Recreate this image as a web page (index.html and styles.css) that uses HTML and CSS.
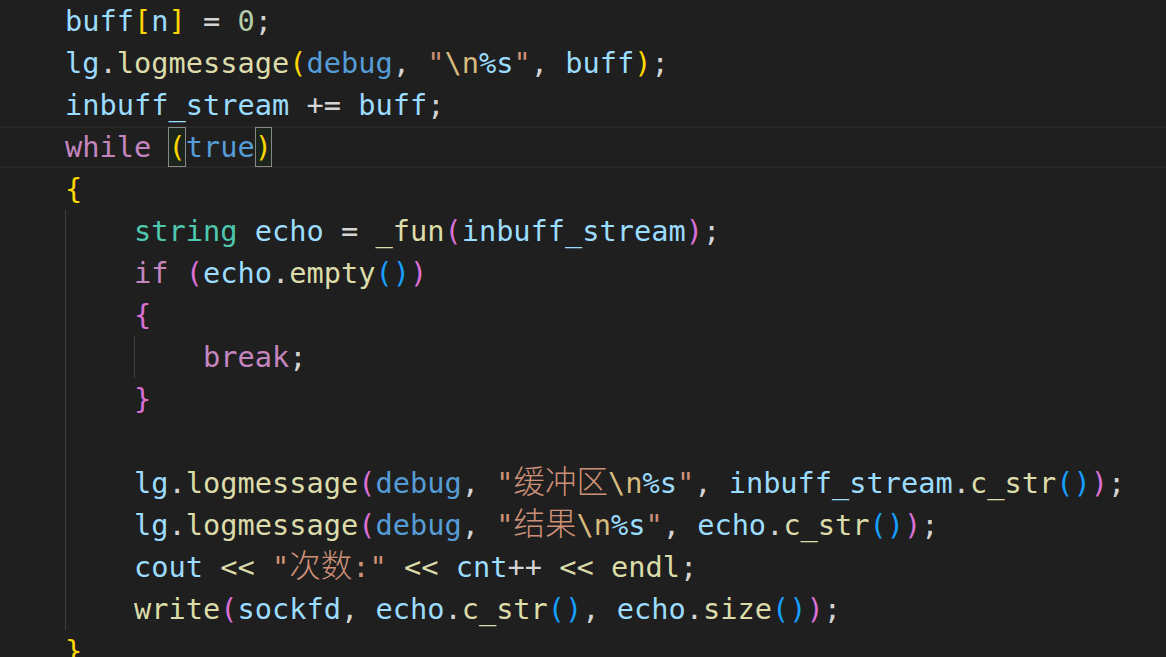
FILE: index.html
```html
<!DOCTYPE html>
<html lang="zh-CN">
<head>
    <meta charset="UTF-8">
    <title>server.cpp</title>
    <link rel="stylesheet" href="styles.css">
</head>
<body>
    <div class="editor">
        <div class="ln"><span class="var">buff</span><span class="b1">[</span><span class="var">n</span><span class="b1">]</span> = <span class="num">0</span>;</div>
        <div class="ln"><span class="var">lg</span>.<span class="fn">logmessage</span><span class="b1">(</span><span class="kw">debug</span>, <span class="str">"<span class="esc">\n</span><span class="fmt">%s</span>"</span>, <span class="var">buff</span><span class="b1">)</span>;</div>
        <div class="ln"><span class="var">inbuff_stream</span> += <span class="var">buff</span>;</div>
        <div class="ln current"><span class="ctl">while</span> <span class="b1 match">(</span><span class="kw">true</span><span class="b1 match">)</span></div>
        <div class="ln"><span class="b1">{</span></div>
        <div class="indent">
            <div class="ln"><span class="type">string</span> <span class="var">echo</span> = <span class="fn">_fun</span><span class="b2">(</span><span class="var">inbuff_stream</span><span class="b2">)</span>;</div>
            <div class="ln"><span class="ctl">if</span> <span class="b2">(</span><span class="var">echo</span>.<span class="fn">empty</span><span class="b3">()</span><span class="b2">)</span></div>
            <div class="ln"><span class="b2">{</span></div>
            <div class="indent">
                <div class="ln"><span class="ctl">break</span>;</div>
            </div>
            <div class="ln"><span class="b2">}</span></div>
            <div class="ln"> </div>
            <div class="ln"><span class="var">lg</span>.<span class="fn">logmessage</span><span class="b2">(</span><span class="kw">debug</span>, <span class="str">"<span class="cjk">缓冲区</span><span class="esc">\n</span><span class="fmt">%s</span>"</span>, <span class="var">inbuff_stream</span>.<span class="fn">c_str</span><span class="b3">()</span><span class="b2">)</span>;</div>
            <div class="ln"><span class="var">lg</span>.<span class="fn">logmessage</span><span class="b2">(</span><span class="kw">debug</span>, <span class="str">"<span class="cjk">结果</span><span class="esc">\n</span><span class="fmt">%s</span>"</span>, <span class="var">echo</span>.<span class="fn">c_str</span><span class="b3">()</span><span class="b2">)</span>;</div>
            <div class="ln"><span class="var">cout</span> <span class="fn">&lt;&lt;</span> <span class="str">"<span class="cjk">次数</span>:"</span> <span class="fn">&lt;&lt;</span> <span class="var">cnt</span>++ <span class="fn">&lt;&lt;</span> <span class="fn">endl</span>;</div>
            <div class="ln"><span class="fn">write</span><span class="b2">(</span><span class="var">sockfd</span>, <span class="var">echo</span>.<span class="fn">c_str</span><span class="b3">()</span>, <span class="var">echo</span>.<span class="fn">size</span><span class="b3">()</span><span class="b2">)</span>;</div>
        </div>
        <div class="ln"><span class="b1">}</span></div>
    </div>
</body>
</html>
```

FILE: styles.css
```css
* {
    margin: 0;
    padding: 0;
    box-sizing: border-box;
}

body {
    background: #1f1f1f;
    overflow: hidden;
    height: 657px;
}

.editor {
    font-family: 'DejaVu Sans Mono', 'Noto Sans CJK SC', monospace;
    font-size: 28.65px;
    color: #d4d4d4;
    padding-left: 65px;
}

.ln {
    height: 42px;
    line-height: 42px;
    white-space: pre;
}

.current {
    margin-left: -65px;
    padding-left: 65px;
    border-top: 2px solid #282828;
    border-bottom: 2px solid #282828;
    line-height: 38px;
}

.indent {
    border-left: 1px solid #404040;
    padding-left: calc(4ch - 1px);
}

/* tokens */
.var { color: #9cdcfe; }
.fn { color: #dcdcaa; }
.kw { color: #569cd6; }
.ctl { color: #c586c0; }
.type { color: #4ec9b0; }
.num { color: #b5cea8; }
.str { color: #ce9178; }
.esc { color: #d7ba7d; }
.fmt { color: #9cdcfe; }

.cjk {
    font-family: 'Noto Sans CJK SC', sans-serif;
    font-size: 31.5px;
    font-weight: 300;
    line-height: 1;
}

/* bracket pair colours */
.b1 { color: #ffd700; }
.b2 { color: #da70d6; }
.b3 { color: #179fff; }

.match {
    background: rgba(0, 100, 0, 0.1);
    box-shadow: inset 0 0 0 1px #888888;
    padding: 3px 0;
}
```
